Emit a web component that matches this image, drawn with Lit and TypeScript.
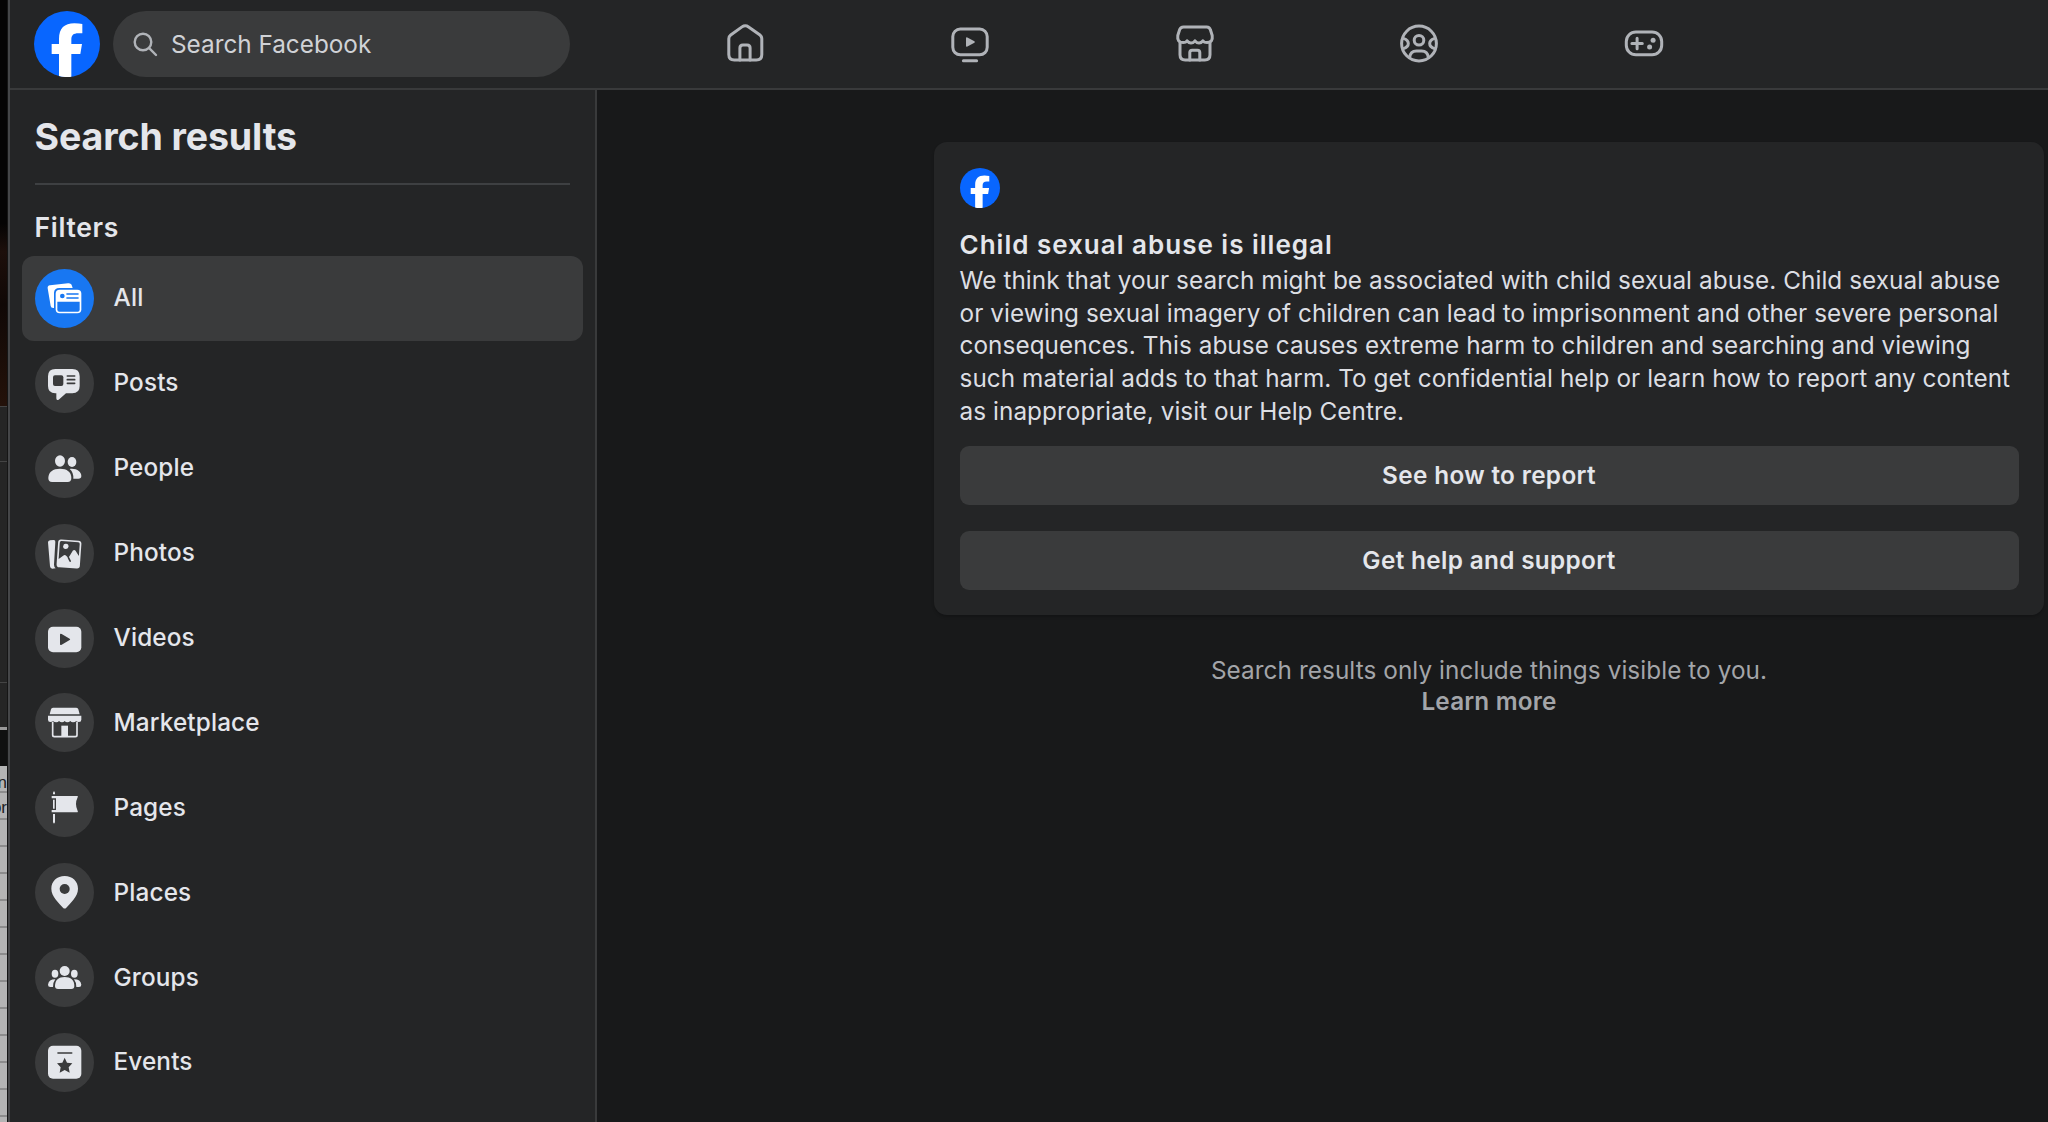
import { LitElement, html, css, svg } from 'lit';
import { customElement, property, state } from 'lit/decorators.js';
import { classMap } from 'lit/directives/class-map.js';

// header icons, 40x40
const navIcons = [
  {
    name: 'Home',
    icon: svg`
      <path d="M3.8 14.8Q3.8 12.4 5.7 11L17 2.9Q20.3 .6 23.6 2.9L35 11Q36.8 12.4 36.8 14.8V30.5Q36.8 36 31.3 36H9.3Q3.8 36 3.8 30.5Z"/>
      <path d="M14.9 36V24Q14.9 21 17.9 21H22.1Q25.1 21 25.1 24V36"/>`,
  },
  {
    name: 'Video',
    icon: svg`
      <rect x="2.8" y="5" width="34.4" height="25.8" rx="7.5"/>
      <path d="M13.4 36.8H26.6"/>
      <path class="solid" d="M16 14.2Q16 12.8 17.4 13.4L24.4 17.2Q25.5 18 24.4 18.8L17.4 22.6Q16 23.2 16 21.8Z"/>`,
  },
  {
    name: 'Marketplace',
    icon: svg`
      <path d="M8.5 3H31.7Q34.6 3 35.4 5.8L37.2 11.5Q38.2 18.6 32 18.6Q29.2 18.6 27.9 16.8Q26.4 18.9 24 18.9Q21.6 18.9 20 16.8Q18.4 18.9 16 18.9Q13.6 18.9 12.1 16.8Q10.8 18.6 8.2 18.6Q1.8 18.6 2.8 11.5L4.6 5.8Q5.5 3 8.5 3Z"/>
      <path d="M5 18V30.8Q5 36 10.2 36H29.8Q35 36 35 30.8V18"/>
      <path d="M14.8 36V28.6Q14.8 26.3 17.2 26.3H22.4Q24.8 26.3 24.8 28.6V36"/>`,
  },
  {
    name: 'Groups',
    icon: svg`
      <circle cx="20" cy="19.5" r="17.4"/>
      <circle cx="20" cy="16.2" r="4.8"/>
      <path d="M4.8 14.6Q9.3 16 9.3 19.6Q9.3 23.2 4.4 24.6"/>
      <path d="M35.2 14.6Q30.7 16 30.7 19.6Q30.7 23.2 35.6 24.6"/>
      <path d="M10.6 33.6Q11.4 27 17.4 27H22.6Q28.6 27 29.4 33.6"/>`,
  },
  {
    name: 'Gaming',
    icon: svg`
      <rect x="2.3" y="8" width="35.4" height="22.8" rx="9.6"/>
      <path d="M13.1 14.3V24.7M7.9 19.5H18.3"/>
      <circle class="solid" cx="29.1" cy="16.2" r="2.5"/>
      <circle class="solid" cx="25.6" cy="22.9" r="2.5"/>`,
  },
];

// filter icons, 177x177, "cut" parts take the colour of the circle behind
const filters = [
  {
    name: 'All',
    icon: svg`
      <path d="M38 58Q37 50 45 49L99 43Q109 42 111 51L113 57H73Q58 57 57 71V117Q48 118 47 111Z"/>
      <rect x="62" y="62" width="77" height="71" rx="12"/>
      <path class="cut" d="M67 98H134V122Q134 128 128 128H73Q67 128 67 122Z"/>
      <circle class="cut" cx="82" cy="81" r="7"/>
      <path class="cut-line" d="M96 75H129M96 87H129"/>`,
  },
  {
    name: 'Posts',
    icon: svg`
      <path d="M61 45H112Q134 45 134 67V96Q134 118 112 118H93L71 137Q64 141 64 133V118H61Q39 118 39 96V67Q39 45 61 45Z"/>
      <rect class="cut" x="54" y="64" width="31" height="32" rx="6"/>
      <path class="cut-line" d="M97 66H119M97 77H119M97 88H119"/>`,
  },
  {
    name: 'People',
    icon: svg`
      <ellipse cx="75" cy="66" rx="15" ry="17"/>
      <path d="M40 117C40 99 54 89 75 89S109 99 109 117Q109 129 98 129H51Q40 129 40 117Z"/>
      <ellipse cx="111" cy="69" rx="13" ry="15"/>
      <path d="M104 90C125 87 139 99 139 111Q139 119 130 119H115Q116 100 104 90Z"/>`,
  },
  {
    name: 'Photos',
    icon: svg`
      <path d="M39 55Q39 50 45 49L56 48Q62 48 61 54L57 122Q57 129 62 133L52 134Q46 134 45 127Z"/>
      <g transform="rotate(4 102 90)">
        <rect x="67" y="48" width="70" height="84" rx="9"/>
        <path class="cut" d="M72 58Q72 53 77 53H127Q132 53 132 58V94L121 79Q117 75 113 79L101 102L93 95Q90 93 87 95L72 107Z"/>
        <circle cx="91" cy="68" r="8"/>
        <path class="cut-line" d="M101 101L107 111"/>
      </g>`,
  },
  {
    name: 'Videos',
    icon: svg`
      <rect x="39" y="53" width="100" height="77" rx="15"/>
      <path class="cut" d="M75 77Q75 72 80 75L104 89Q107 91 104 93L80 107Q75 110 75 105Z"/>`,
  },
  {
    name: 'Marketplace',
    icon: svg`
      <path d="M54 44H124Q129 44 130 49L134 64H44L48 49Q49 44 54 44Z"/>
      <path d="M39 68H139V80Q139 87 132 87Q127 87 124 84Q120 88 114 88Q109 88 106 84Q102 88 97 88Q92 88 89 84Q86 88 81 88Q76 88 72 84Q69 88 64 88Q58 88 54 84Q51 87 46 87Q39 87 39 80Z"/>
      <path class="line" d="M53 86V126Q53 131 58 131H121Q126 131 126 126V86"/>
      <rect x="79" y="98" width="20" height="34"/>`,
  },
  {
    name: 'Pages',
    icon: svg`
      <path d="M50 54H127Q130 54 128 58Q118 78 128 99Q130 103 127 103H50V96H63V61H50Z"/>
      <path d="M57 39L60 44V49H54V44ZM54 65H59V92H54ZM54 108H60V133L57 137L54 133Z"/>`,
  },
  {
    name: 'Places',
    icon: svg`
      <path d="M89 39C112 39 129 55 129 77C129 101 106 120 94 134Q89 139 84 134C72 120 49 101 49 77C49 55 66 39 89 39Z"/>
      <circle class="cut" cx="89" cy="78" r="15"/>`,
  },
  {
    name: 'Groups',
    icon: svg`
      <circle cx="89" cy="69" r="15"/>
      <path d="M60 114C60 96 71 87 89 87S118 96 118 114Q118 123 109 123H69Q60 123 60 114Z"/>
      <ellipse cx="60" cy="77" rx="10" ry="12"/>
      <ellipse cx="118" cy="77" rx="10" ry="12"/>
      <path d="M61 94Q54 103 54 117H46Q39 117 39 110Q41 94 61 94ZM117 94Q124 103 124 117H132Q139 117 139 110Q137 94 117 94Z"/>`,
  },
  {
    name: 'Events',
    icon: svg`
      <rect x="39" y="38" width="100" height="99" rx="15"/>
      <path class="cut-line" d="M69 60H110"/>
      <path class="cut" d="M89 74L96 89L112 91L101 103L104 119L89 111L74 119L77 103L66 91L82 89Z"/>`,
  },
];

@customElement('fb-logo')
export class FbLogo extends LitElement {
  static styles = css`
    :host {
      display: block;
    }
    svg {
      display: block;
      width: 100%;
      height: 100%;
    }
  `;

  render() {
    return html`
      <svg viewBox="0 0 198 198">
        <circle cx="99" cy="99" r="99" fill="#0866ff" />
        <path
          fill="#fff"
          d="M75 195V129H53V99H75V84C75 52 91 37 121 37Q136 37 145 39V67H133C118 67 112 73 112 86V99H144L139 129H112V197Q93 200 75 195Z"
        />
      </svg>
    `;
  }
}

@customElement('filter-item')
export class FilterItem extends LitElement {
  static styles = css`
    :host {
      display: block;
    }
    .item {
      display: flex;
      align-items: center;
      gap: 20px;
      height: 84.9px;
      padding-left: 13px;
      border-radius: 12px;
      box-sizing: border-box;
      color: #e4e6eb;
      font-size: 24.3px;
      font-weight: 500;
      letter-spacing: 0.15px;
      --circle: #3a3b3c;
      --glyph: #e4e6eb;
    }
    .active {
      background: #3a3b3c;
      --circle: #1877f2;
      --glyph: #fff;
    }
    .circle {
      width: 59px;
      height: 59px;
      border-radius: 50%;
      background: var(--circle);
    }
    .name {
      padding-bottom: 2px;
    }
    svg {
      display: block;
      fill: var(--glyph);
    }
    .cut {
      fill: var(--circle);
    }
    .cut-line {
      fill: none;
      stroke: var(--circle);
      stroke-width: 5;
      stroke-linecap: round;
    }
    .line {
      fill: none;
      stroke: var(--glyph);
      stroke-width: 5;
    }
  `;

  @property() name = '';
  @property({ attribute: false }) icon: unknown;
  @property({ type: Boolean }) active = false;

  render() {
    return html`
      <div class=${classMap({ item: true, active: this.active })}>
        <div class="circle">
          <svg width="59" height="59" viewBox="0 0 177 177">${this.icon}</svg>
        </div>
        <span class="name">${this.name}</span>
      </div>
    `;
  }
}

@customElement('app-root')
export class AppRoot extends LitElement {
  static styles = css`
    :host {
      display: flex;
      width: 100%;
      height: 1122px;
      overflow: hidden;
      background: #18191a;
      color: #e4e6eb;
      font-family: Inter, 'Liberation Sans', sans-serif;
    }

    /* sliver of the windows behind the browser */
    .behind {
      display: flex;
      flex-direction: column;
      flex: none;
      width: 8px;
      overflow: hidden;
      border-right: 1px solid #151515;
      box-sizing: border-box;
      background: #050404;
      font: 17px/25px 'Liberation Sans', sans-serif;
      color: #222;
    }
    .photo {
      height: 406px;
      background: linear-gradient(#050404 55%, #1d0f0b 62%, #100806 75%, #24120a);
    }
    .panel {
      height: 55px;
      background: #252525;
      border-top: 1px solid #444;
      box-sizing: border-box;
    }
    .tall {
      height: 221px;
    }
    .short {
      height: 48px;
      border-bottom: 3px solid #999;
    }
    .black {
      height: 36px;
      background: #101010;
    }
    .sheet {
      flex: 1;
      padding-top: 4px;
      background: repeating-linear-gradient(#b4b4b4 0 25px, #8c8c8c 25px 27px);
    }
    .sheet div {
      direction: rtl;
      white-space: nowrap;
    }

    .window {
      display: flex;
      flex-direction: column;
      flex: 1;
      min-width: 0;
      border-left: 2px solid #454648;
    }

    .header {
      display: flex;
      align-items: center;
      flex: none;
      height: 90px;
      padding: 0 0 2px 24px;
      box-sizing: border-box;
      background: #242526;
      box-shadow: inset 0 -2px #393a3b;
    }
    .brand {
      width: 66px;
      height: 66px;
    }
    .search {
      display: flex;
      align-items: center;
      gap: 13px;
      width: 457px;
      height: 66px;
      margin-left: 13px;
      padding-left: 20px;
      box-sizing: border-box;
      border-radius: 33px;
      background: #3a3b3c;
    }
    .search input {
      flex: 1;
      min-width: 0;
      padding: 0;
      border: 0;
      outline: 0;
      background: none;
      color: #e4e6eb;
      font: 24.3px Inter, sans-serif;
    }
    .search input::placeholder {
      color: #d0d2d6;
      opacity: 1;
    }
    .nav {
      display: flex;
      margin-left: 62.8px;
    }
    .tab {
      display: flex;
      justify-content: center;
      width: 224.7px;
    }
    .tab svg {
      fill: none;
      stroke: #b0b3b8;
      stroke-width: 3;
      stroke-linecap: round;
      stroke-linejoin: round;
    }
    .solid {
      fill: #b0b3b8;
      stroke: none;
    }

    .body {
      display: flex;
      flex: 1;
      min-height: 0;
    }
    .sidebar {
      flex: none;
      width: 587px;
      padding: 0 12px 0 11.5px;
      box-sizing: border-box;
      background: #242526;
      border-right: 2px solid #393a3b;
    }
    .sidebar h1 {
      margin: 0 13px;
      padding: 25px 0 24.5px;
      border-bottom: 2px solid #3e4042;
      font-size: 37.5px;
      line-height: 43px;
      font-weight: 700;
      letter-spacing: -0.1px;
    }
    .sidebar h2 {
      margin: 0;
      padding: 26px 13px 12.5px;
      font-size: 26.5px;
      line-height: 33px;
      font-weight: 600;
      letter-spacing: 0.7px;
    }

    .results {
      flex: 1;
      padding: 52px 4px 0 337px;
    }
    .card {
      height: 473px;
      padding: 26px 25.5px;
      box-sizing: border-box;
      border-radius: 13px;
      background: #242526;
      box-shadow: 0 2px 3px rgba(0, 0, 0, 0.2);
    }
    .card fb-logo {
      width: 40px;
      height: 40px;
    }
    .card h3 {
      margin: 20px 0 0;
      font-size: 26px;
      line-height: 33px;
      font-weight: 600;
      letter-spacing: 1px;
    }
    .card p {
      margin: 3px 0 0;
      color: #dcdee3;
      font-size: 24.3px;
      line-height: 32.65px;
      letter-spacing: 0.07px;
      white-space: nowrap;
    }
    .actions {
      display: flex;
      flex-direction: column;
      gap: 26px;
      margin-top: 19px;
    }
    .actions button {
      height: 59px;
      padding: 0 0 2px;
      border: 0;
      border-radius: 9px;
      background: #3a3b3c;
      color: #e4e6eb;
      font: 600 24.3px Inter, sans-serif;
      letter-spacing: 0.35px;
    }
    .note {
      margin-top: 40px;
      text-align: center;
      color: #a3a5a9;
      font-size: 24.3px;
      line-height: 31px;
      letter-spacing: 0.08px;
    }
    .note b {
      display: block;
      font-weight: 600;
      letter-spacing: 0.18px;
    }
  `;

  @state() private selected = 'All';

  render() {
    return html`
      <div class="behind">
        <div class="photo"></div>
        <div class="panel"></div>
        <div class="panel tall"></div>
        <div class="panel short"></div>
        <div class="black"></div>
        <div class="sheet">
          <div>n</div>
          <div>or</div>
        </div>
      </div>
      <div class="window">
        <div class="header">
          <fb-logo class="brand"></fb-logo>
          <label class="search">
            <svg width="25" height="25" viewBox="0 0 25 25" fill="none" stroke="#b0b3b8" stroke-width="2.4" stroke-linecap="round">
              <circle cx="10" cy="10" r="8.3" />
              <path d="M16.2 16.2L23 23" />
            </svg>
            <input placeholder="Search Facebook" />
          </label>
          <div class="nav">
            ${navIcons.map(
              (n) => html`<div class="tab" title=${n.name}><svg width="40" height="40" viewBox="0 0 40 40">${n.icon}</svg></div>`
            )}
          </div>
        </div>
        <div class="body">
          <div class="sidebar">
            <h1>Search results</h1>
            <h2>Filters</h2>
            ${filters.map(
              (f) => html`<filter-item
                .name=${f.name}
                .icon=${f.icon}
                ?active=${this.selected === f.name}
                @click=${() => (this.selected = f.name)}
              ></filter-item>`
            )}
          </div>
          <div class="results">
            <div class="card">
              <fb-logo></fb-logo>
              <h3>Child sexual abuse is illegal</h3>
              <p>
                We think that your search might be associated with child sexual abuse. Child sexual abuse<br />
                or viewing sexual imagery of children can lead to imprisonment and other severe personal<br />
                consequences. This abuse causes extreme harm to children and searching and viewing<br />
                such material adds to that harm. To get confidential help or learn how to report any content<br />
                as inappropriate, visit our Help Centre.
              </p>
              <div class="actions">
                <button>See how to report</button>
                <button>Get help and support</button>
              </div>
            </div>
            <div class="note">
              Search results only include things visible to you.
              <b>Learn more</b>
            </div>
          </div>
        </div>
      </div>
    `;
  }
}
